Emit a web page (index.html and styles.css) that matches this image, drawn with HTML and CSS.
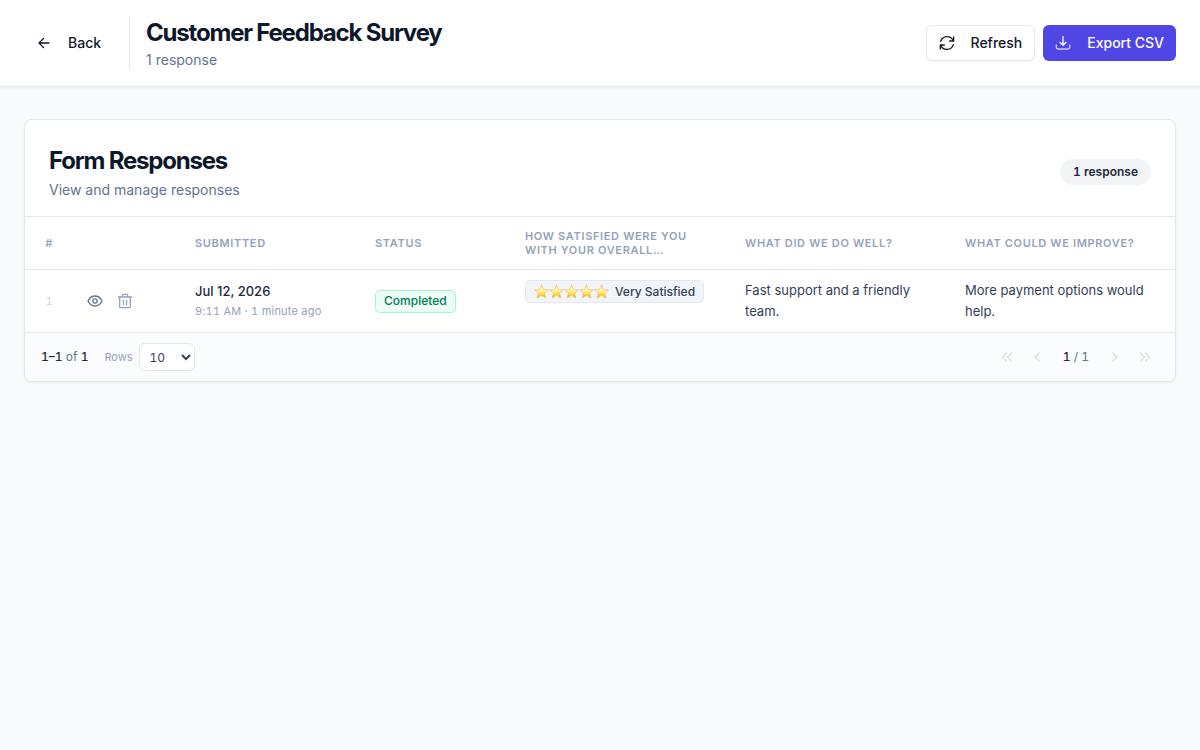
FILE: index.html
```html
<!DOCTYPE html>
<html lang="en">
<head>
    <meta charset="UTF-8">
    <meta name="viewport" content="width=device-width, initial-scale=1.0">
    <title>Customer Feedback Survey - Responses</title>
    <link rel="stylesheet" href="styles.css">
</head>
<body>
    <!-- Shared shapes -->
    <svg class="sprite" aria-hidden="true">
        <defs>
            <linearGradient id="gold" x1="0" y1="0" x2="0" y2="1">
                <stop offset="0" stop-color="#ffe9a8"/>
                <stop offset="0.4" stop-color="#fff8c0"/>
                <stop offset="0.65" stop-color="#ffe54a"/>
                <stop offset="1" stop-color="#f9a60c"/>
            </linearGradient>
            <symbol id="star" viewBox="0 0 16 16">
                <path d="M8 0.8 10 6 15.4 6.2 11.2 9.6 12.7 15 8 12 3.3 15 4.8 9.6 0.6 6.2 6 6Z" fill="url(#gold)" stroke="#f0b050" stroke-width="0.6" stroke-linejoin="round"/>
            </symbol>
        </defs>
    </svg>

    <header class="topbar">
        <div class="topbar-left">
            <button class="btn btn-ghost">
                <svg class="icon" viewBox="0 0 16 16"><path d="M13 8H3M7.500 3.500 3 8l4.500 4.500"/></svg>
                Back
            </button>
            <div class="topbar-title">
                <h1>Customer Feedback Survey</h1>
                <p>1 response</p>
            </div>
        </div>
        <div class="topbar-actions">
            <button class="btn btn-outline">
                <svg class="icon" viewBox="0 0 24 24"><path d="M22 3v6h-6M21.500 9A10 10 0 0 0 2.500 9.500M2 21v-6h6M2.500 15A10 10 0 0 0 21.500 14.500"/></svg>
                Refresh
            </button>
            <button class="btn btn-primary">
                <svg class="icon" viewBox="0 0 24 24"><path d="M12 2.500v12.500M7.500 11l4.500 4.500 4.500-4.500"/><path class="tray" d="M2 15v3.500A2.500 2.500 0 0 0 4.500 21h15a2.500 2.500 0 0 0 2.500-2.500V15"/></svg>
                Export CSV
            </button>
        </div>
    </header>

    <main>
        <section class="card">
            <div class="card-header">
                <div>
                    <h2>Form Responses</h2>
                    <p>View and manage responses</p>
                </div>
                <span class="count">1 response</span>
            </div>

            <table>
                <colgroup>
                    <col class="col-num">
                    <col class="col-actions">
                    <col class="col-date">
                    <col class="col-status">
                    <col class="col-answer">
                    <col class="col-answer">
                    <col>
                </colgroup>
                <thead>
                    <tr>
                        <th class="num">#</th>
                        <th></th>
                        <th>Submitted</th>
                        <th>Status</th>
                        <th>How satisfied were you with your overall…</th>
                        <th>What did we do well?</th>
                        <th>What could we improve?</th>
                    </tr>
                </thead>
                <tbody>
                    <tr>
                        <td class="num">1</td>
                        <td class="actions">
                            <div class="row-actions">
                                <button class="icon-btn view" aria-label="View response">
                                    <svg class="icon" viewBox="0 0 24 24"><path d="M1.500 12S5 4.500 12 4.500 22.500 12 22.500 12 19 19.500 12 19.500 1.500 12 1.500 12Z"/><circle cx="12" cy="12" r="3.200"/></svg>
                                </button>
                                <button class="icon-btn" aria-label="Delete response">
                                    <svg class="icon" viewBox="0 0 24 24"><path d="M2 6h20M4 6v14.500A1.500 1.500 0 0 0 5.500 22h13a1.500 1.500 0 0 0 1.500-1.500V6M8 6V3.500A1.500 1.500 0 0 1 9.500 2h5A1.500 1.500 0 0 1 16 3.500V6M9.700 11v6.500M14.300 11v6.500"/></svg>
                                </button>
                            </div>
                        </td>
                        <td>
                            <div class="date">Jul 12, 2026</div>
                            <div class="time">9:11 AM · 1 minute ago</div>
                        </td>
                        <td><span class="tag tag-done">Completed</span></td>
                        <td class="answer">
                            <span class="tag tag-choice">
                                <span class="stars" role="img" aria-label="5 stars">
                                    <svg><use href="#star"/></svg>
                                    <svg><use href="#star"/></svg>
                                    <svg><use href="#star"/></svg>
                                    <svg><use href="#star"/></svg>
                                    <svg><use href="#star"/></svg>
                                </span>
                                Very Satisfied
                            </span>
                        </td>
                        <td class="answer">Fast support and a friendly team.</td>
                        <td class="answer">More payment options would help.</td>
                    </tr>
                </tbody>
            </table>

            <div class="card-footer">
                <div class="range">
                    <span><b>1–1</b> of <b>1</b></span>
                    <div class="rows">
                        <label for="rows">Rows</label>
                        <select id="rows">
                            <option>10</option>
                            <option>25</option>
                            <option>50</option>
                        </select>
                    </div>
                </div>
                <nav class="pager" aria-label="Pagination">
                    <button class="icon-btn" aria-label="First page" disabled>
                        <svg class="icon" viewBox="0 0 16 16"><path d="M7.500 4l-4 4 4 4M12.500 4l-4 4 4 4"/></svg>
                    </button>
                    <button class="icon-btn" aria-label="Previous page" disabled>
                        <svg class="icon" viewBox="0 0 16 16"><path d="M10 4 6 8l4 4"/></svg>
                    </button>
                    <span class="page"><b>1</b> / <i>1</i></span>
                    <button class="icon-btn" aria-label="Next page" disabled>
                        <svg class="icon" viewBox="0 0 16 16"><path d="M6 4l4 4-4 4"/></svg>
                    </button>
                    <button class="icon-btn" aria-label="Last page" disabled>
                        <svg class="icon" viewBox="0 0 16 16"><path d="M3.500 4l4 4-4 4M8.500 4l4 4-4 4"/></svg>
                    </button>
                </nav>
            </div>
        </section>
    </main>
</body>
</html>
```
FILE: styles.css
```css
* {
    margin: 0;
    padding: 0;
    box-sizing: border-box;
}

body {
    font-family: Inter, sans-serif;
    font-size: 14px;
    line-height: 20px;
    background-color: #f8fafc;
    color: #0f172a;
}

button,
select {
    font: inherit;
    color: inherit;
}

button {
    border: none;
    background: none;
    cursor: pointer;
}

.sprite {
    position: absolute;
    width: 0;
    height: 0;
}

.icon {
    width: 16px;
    height: 16px;
    fill: none;
    stroke: currentColor;
    stroke-width: 2;
    stroke-linecap: round;
    stroke-linejoin: round;
}

.icon[viewBox="0 0 16 16"] {
    stroke-width: 1.3;
}

h1,
h2 {
    font-size: 24px;
    line-height: 34px;
    font-weight: 700;
    letter-spacing: -0.05em;
}

/* Top bar */
.topbar {
    display: flex;
    justify-content: space-between;
    align-items: center;
    padding: 16px 24px;
    background-color: #fff;
    border-bottom: 1px solid #e2e8f0;
    box-shadow: 0 1px 2px rgba(15, 23, 42, 0.05);
}

.topbar-left,
.topbar-actions {
    display: flex;
    align-items: center;
}

.topbar-left {
    gap: 16px;
}

.topbar-actions {
    gap: 8px;
}

.topbar-title {
    padding-left: 16px;
    border-left: 1px solid #e2e8f0;
}

.topbar-title p,
.card-header p {
    color: #64748b;
}

.btn {
    display: flex;
    align-items: center;
    gap: 16px;
    height: 36px;
    padding: 0 12px;
    border-radius: 6px;
    font-weight: 500;
    color: #111827;
}

.btn-outline {
    border: 1px solid #e5e7eb;
    background-color: #fff;
    box-shadow: 0 1px 2px rgba(0, 0, 0, 0.05);
}

.btn-primary {
    background-color: #4f46e5;
    color: #fff;
}

.tray {
    opacity: 0.7;
}

/* Card */
main {
    padding: 32px 24px;
}

.card {
    background-color: #fff;
    border: 1px solid #e2e8f0;
    border-radius: 8px;
    box-shadow: 0 1px 2px rgba(15, 23, 42, 0.05);
    overflow: hidden;
}

.card-header {
    display: flex;
    justify-content: space-between;
    align-items: center;
    padding: 24px 24px 16px;
    border-bottom: 1px solid #e2e8f0;
}

.card-header p {
    margin-top: 2px;
}

.count {
    padding: 3px 13px;
    border-radius: 13px;
    background-color: #f3f4f6;
    font-size: 12px;
    font-weight: 600;
    font-variant-numeric: tabular-nums;
    color: #1f2937;
}

/* Table */
table {
    width: 100%;
    table-layout: fixed;
    border-collapse: separate;
    border-spacing: 0;
}

.col-num {
    width: 48px;
}

.col-actions {
    width: 102px;
}

.col-date {
    width: 180px;
}

.col-status {
    width: 150px;
}

.col-answer {
    width: 220px;
}

th,
td {
    padding: 10px 20px;
    border-bottom: 1px solid #e2e8f0;
    text-align: left;
}

th {
    padding: 12px 20px;
    font-size: 11px;
    line-height: 14px;
    font-weight: 600;
    letter-spacing: 0.06em;
    text-transform: uppercase;
    color: #94a3b8;
}

.num {
    padding-left: 0;
    padding-right: 0;
    text-align: center;
}

td.num {
    font-size: 11px;
    font-variant-numeric: tabular-nums;
    color: #cbd5e1;
}

td.actions {
    padding: 0 8px;
}

.row-actions {
    display: flex;
    gap: 2px;
}

.icon-btn {
    display: flex;
    align-items: center;
    justify-content: center;
    width: 28px;
    height: 28px;
    border-radius: 6px;
    color: #94a3b8;
}

.icon-btn.view {
    color: #64748b;
}

.date {
    font-size: 13px;
    font-weight: 500;
    color: #1e293b;
}

.time {
    font-size: 11px;
    letter-spacing: 0.02em;
    font-variant-numeric: tabular-nums;
    color: #94a3b8;
}

.answer {
    vertical-align: top;
    font-size: 13px;
    line-height: 21px;
    color: #334155;
}

.tag {
    display: inline-flex;
    align-items: center;
    height: 23px;
    padding: 0 8px;
    border: 1px solid;
    border-radius: 5px;
    font-size: 12px;
    font-weight: 500;
    white-space: nowrap;
    vertical-align: top;
}

.tag-done {
    background-color: #ecfdf5;
    border-color: #a7f3d0;
    color: #047857;
}

.tag-choice {
    gap: 6px;
    background-color: #f1f5f9;
    border-color: #e2e8f0;
    color: #334155;
}

.stars {
    display: flex;
}

.stars svg {
    width: 15px;
    height: 15px;
}

/* Footer */
.card-footer {
    display: flex;
    justify-content: space-between;
    align-items: center;
    padding: 10px 16px;
    background-color: #fbfcfe;
    font-size: 12px;
    font-variant-numeric: tabular-nums;
    color: #64748b;
}

.card-footer b {
    font-weight: 500;
    color: #1e293b;
}

.range,
.rows,
.pager {
    display: flex;
    align-items: center;
}

.range {
    gap: 16px;
}

.rows {
    gap: 6px;
}

.rows label {
    font-size: 11px;
    color: #94a3b8;
}

.rows select {
    width: 56px;
    height: 28px;
    padding: 0 0 0 6px;
    border: 1px solid #e2e8f0;
    border-radius: 6px;
    background-color: #fff;
    color: #334155;
}

.pager {
    gap: 2px;
}

.page {
    padding: 0 10px;
}

.page i {
    font-style: normal;
}

.pager .icon-btn {
    color: #d8dee8;
}
```
